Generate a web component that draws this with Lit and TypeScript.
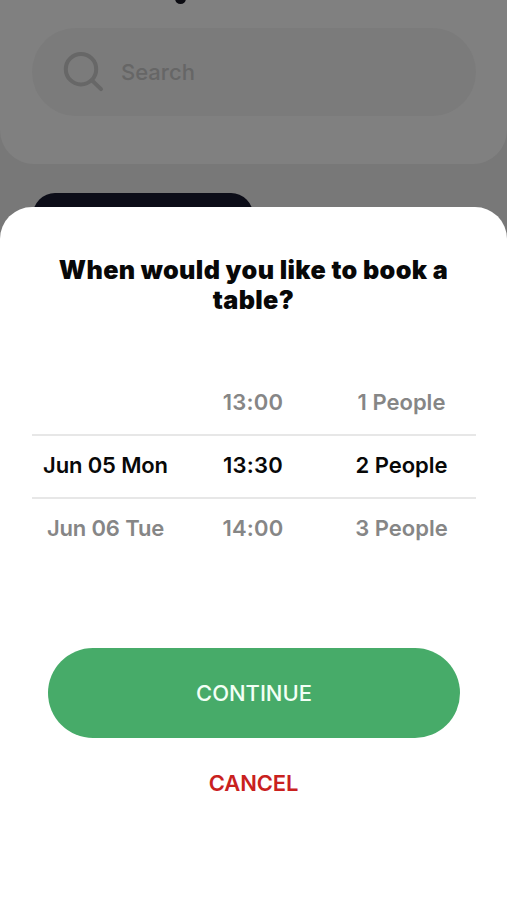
import { LitElement, html, css } from "lit";
import { customElement } from "lit/decorators.js";
import { classMap } from "lit/directives/class-map.js";

interface Row {
  date: string;
  time: string;
  people: string;
  selected?: boolean;
}

const ROWS: Row[] = [
  { date: "", time: "13:00", people: "1 People" },
  { date: "Jun 05 Mon", time: "13:30", people: "2 People", selected: true },
  { date: "Jun 06 Tue", time: "14:00", people: "3 People" },
];

@customElement("search-header")
class SearchHeader extends LitElement {
  static styles = css`
    :host {
      display: block;
      box-sizing: border-box;
      height: 164px;
      padding: 28px 31px 0 32px;
      background: #808080;
      border-radius: 0 0 34px 34px;
      position: relative;
    }
    .descender {
      position: absolute;
      left: 175px;
      top: -6px;
      width: 11px;
      height: 10px;
      border-radius: 0 0 5.5px 5.5px;
      background: #0c0c12;
    }
    .search {
      display: flex;
      align-items: center;
      height: 88px;
      box-sizing: border-box;
      padding-left: 30px;
      border-radius: 44px;
      background: #7b7b7b;
      color: #666;
      font-size: 22px;
      font-weight: 550;
      letter-spacing: 0;
    }
    svg {
      width: 44px;
      height: 44px;
      margin-right: 15px;
      fill: none;
      stroke: #676767;
      stroke-width: 4;
      stroke-linecap: round;
    }
  `;
  render() {
    return html`
      <div class="descender"></div>
      <div class="search">
        <svg viewBox="0 0 44 44">
          <circle cx="19" cy="19.2" r="15.2" />
          <path d="M30.5 30.8 39 39.2" />
        </svg>
        <span>Search</span>
      </div>
    `;
  }
}

@customElement("booking-picker")
class BookingPicker extends LitElement {
  static styles = css`
    :host {
      display: block;
      margin: 0 31px 0 32px;
      font-size: 22px;
      font-weight: 570;
      letter-spacing: -0.15px;
    }
    .row {
      display: grid;
      grid-template-columns: 147px 148px 149px;
      align-items: center;
      text-align: center;
      height: 63px;
      padding-bottom: 2px;
      box-sizing: border-box;
      color: #868686;
      white-space: nowrap;
    }
    .time {
      letter-spacing: 0.2px;
    }
    .people {
      letter-spacing: 0;
    }
    .selected {
      height: 65px;
      margin-bottom: -2px;
      padding-bottom: 3px;
      border-top: 2px solid #e7e7e7;
      border-bottom: 2px solid #e7e7e7;
      color: #080808;
    }
    .selected + .row {
      padding-bottom: 1px;
    }
  `;
  render() {
    return ROWS.map(
      (r) => html`<div class=${classMap({ row: true, selected: !!r.selected })}>
        <span>${r.date}</span><span class="time">${r.time}</span><span class="people">${r.people}</span>
      </div>`
    );
  }
}

@customElement("app-root")
class AppRoot extends LitElement {
  static styles = css`
    :host {
      display: flex;
      flex-direction: column;
      height: 900px;
      overflow: hidden;
      background: #787878;
      font-family: Inter, "Liberation Sans", sans-serif;
    }
    search-header {
      flex: none;
    }
    .card {
      flex: none;
      width: 220px;
      height: 30px;
      margin: 29px 0 -16px 33px;
      border-radius: 22px 22px 0 0;
      background: #0c0d18;
    }
    .sheet {
      flex: 1;
      display: flex;
      flex-direction: column;
      background: #fff;
      border-radius: 32px 32px 0 0;
      z-index: 1;
    }
    h1 {
      margin: 48px 0 0;
      height: 60px;
      text-align: center;
      font-size: 25.2px;
      line-height: 30px;
      font-weight: 880;
      letter-spacing: 0.35px;
      color: #080808;
    }
    booking-picker {
      margin-top: 56px;
    }
    button {
      font: 550 22px/1 Inter, "Liberation Sans", sans-serif;
      letter-spacing: -0.05px;
      border: 0;
      padding: 0;
      background: none;
    }
    .continue {
      height: 90px;
      margin: 88px 47px 0 48px;
      padding-bottom: 1px;
      border-radius: 45px;
      background: #47ab69;
      color: #f2fff5;
    }
    .cancel {
      align-self: center;
      margin-top: 34px;
      font-weight: 580;
      letter-spacing: -0.15px;
      color: #c9211e;
    }
  `;
  render() {
    return html`
      <search-header></search-header>
      <div class="card"></div>
      <section class="sheet">
        <h1>When would you like to book a<br />table?</h1>
        <booking-picker></booking-picker>
        <button class="continue">CONTINUE</button>
        <button class="cancel">CANCEL</button>
      </section>
    `;
  }
}
